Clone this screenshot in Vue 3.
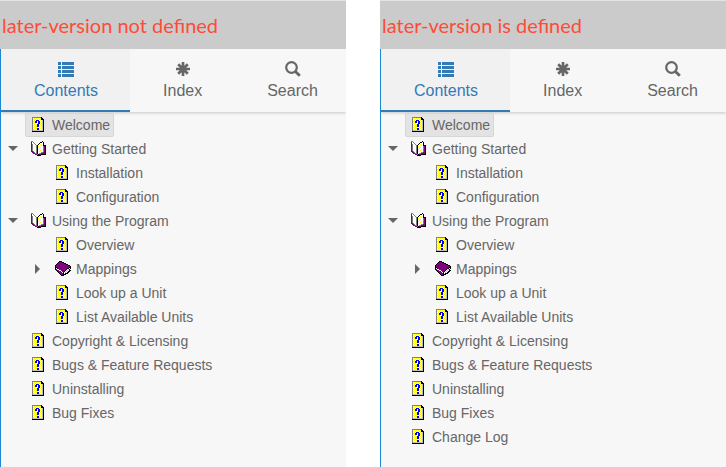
<script setup>
import { reactive } from 'vue'

const topics = (extra) => [
  { title: 'Welcome', selected: true },
  { title: 'Getting Started', open: true, children: [
    { title: 'Installation' },
    { title: 'Configuration' },
  ] },
  { title: 'Using the Program', open: true, children: [
    { title: 'Overview' },
    { title: 'Mappings', open: false, children: [] },
    { title: 'Look up a Unit' },
    { title: 'List Available Units' },
  ] },
  { title: 'Copyright & Licensing' },
  { title: 'Bugs & Feature Requests' },
  { title: 'Uninstalling' },
  { title: 'Bug Fixes' },
  ...extra,
]

const panels = reactive([
  { heading: 'later-version not defined', nodes: topics([]) },
  { heading: 'later-version is defined', nodes: topics([{ title: 'Change Log' }]) },
])

// Flatten the visible part of a tree into rows that carry their depth.
const rows = (nodes, depth = 0) =>
  nodes.flatMap((node) => [
    { node, depth },
    ...(node.open ? rows(node.children, depth + 1) : []),
  ])

const tabs = ['Contents', 'Index', 'Search']

const palette = { G: '#808080', W: '#ffffff', Y: '#ffff00', B: '#0000ff', K: '#000000', P: '#800080', S: '#c0c0c0' }

// Pixel art, one character per pixel.
const art = {
  page: [
    ' GGGGGGGGGK     ',
    ' GWYWYWYWYKK    ',
    ' GYWYWYWYWKKK   ',
    ' GWYWBBBWYWSK   ',
    ' GYWBBWBBWYSK   ',
    ' GWYBBWBBYWSK   ',
    ' GYWYWWBBWYSK   ',
    ' GWYWYBBWYWSK   ',
    ' GYWYWBBYWYSK   ',
    ' GWYWYBBWYWSK   ',
    ' GYWYWYWYWYSK   ',
    ' GWYWYBBWYWSK   ',
    ' GYWYWBBYWYSK   ',
    ' GSSSSSSSSSSK   ',
    ' KKKKKKKKKKKK   ',
  ],
  open: [
    'GG         K    ',
    'PWG      KKWK   ',
    'PWWG    KWWWK   ',
    'PGWWG  KWYWWK   ',
    'PGWWWGKWWWYWKKK ',
    'PGWWWGKYWWWWGPK ',
    'PGWWWGKWWYWWGPK ',
    'PGWWWGKWYWWWGPK ',
    'PGWWWGKYWWYWGPK ',
    'PGWWWGKWWYWWGPK ',
    'PPGWWGKWYWWWGPK ',
    ' PPGWGKWWWGGPPK ',
    '  PPGGKWGGPPPPK ',
    '    PPGKPPKKKKK ',
    '      KKKK      ',
  ],
  closed: [
    '    KKK         ',
    '   KPPPKK       ',
    '  KPPPPPPKK     ',
    ' KPPPPPPPPPKK   ',
    'KPPPPPPPPPPPPKK ',
    'KPPPPPPPPPPPPPPK',
    'KKPPPPPPPPPPPPKK',
    'KWKPPPPPPPPPKKWK',
    'KPWWPPPPPPPKWSK ',
    ' KPPWWPPPPKWSWKK',
    '  KPPPWPPKWSWKK ',
    '   KPPPWKWSWKK  ',
    '    KPPPKWKKK   ',
    '     KPPKKK     ',
    '      KKK       ',
  ],
}

// Merge equal neighbours in every line of the art into single rects.
const toRects = (lines) =>
  lines.flatMap((line, y) =>
    [...line.matchAll(/([A-Z])\1*/g)].map((m) => ({
      x: m.index, y, w: m[0].length, fill: palette[m[1]],
    })),
  )

const icons = Object.fromEntries(Object.entries(art).map(([k, v]) => [k, toRects(v)]))
const iconFor = (node) => (node.children ? (node.open ? icons.open : icons.closed) : icons.page)
</script>

<template>
  <main class="compare">
    <section v-for="panel in panels" :key="panel.heading" class="panel">
      <h2 class="banner">{{ panel.heading }}</h2>
      <div class="help">
        <nav class="tabs">
          <button v-for="tab in tabs" :key="tab" type="button" class="tab" :class="{ active: tab === 'Contents' }">
            <svg v-if="tab === 'Contents'" class="glyph" viewBox="0 0 16 16" shape-rendering="crispEdges" aria-hidden="true">
              <path d="M0 1h3v3H0zM4 1h12v3H4zM0 5h3v3H0zM4 5h12v3H4zM0 9h3v3H0zM4 9h12v3H4zM0 13h3v3H0zM4 13h12v3H4z" />
            </svg>
            <svg v-else-if="tab === 'Index'" class="glyph" viewBox="0 0 16 16" aria-hidden="true">
              <path d="M8 1v14M1 8h14M3.2 3.2l9.6 9.6M12.8 3.2l-9.6 9.6" fill="none" stroke="currentColor" stroke-width="2.7" />
            </svg>
            <svg v-else class="glyph" viewBox="0 0 16 16" aria-hidden="true">
              <circle cx="6.5" cy="6.5" r="5.3" fill="none" stroke="currentColor" stroke-width="2.2" />
              <path d="M10.4 10.4l4.4 4.4" fill="none" stroke="currentColor" stroke-width="2.8" />
            </svg>
            <span>{{ tab }}</span>
          </button>
        </nav>
        <ul class="tree">
          <li v-for="{ node, depth } in rows(panel.nodes)" :key="node.title" class="row" :class="{ nested: depth > 0 }">
            <button
              v-if="node.children"
              type="button"
              class="toggle"
              :aria-label="'Toggle ' + node.title"
              :aria-expanded="node.open"
              @click="node.open = !node.open"
            >
              <svg class="caret" viewBox="0 0 10 10" aria-hidden="true">
                <path v-if="node.open" d="M0 2h10L5 7z" />
                <path v-else d="M3 0l5 5-5 5z" />
              </svg>
            </button>
            <span v-else class="toggle"></span>
            <a href="#" class="label" :class="{ selected: node.selected }">
              <svg class="icon" viewBox="0 0 16 16" shape-rendering="crispEdges" aria-hidden="true">
                <rect v-for="(r, i) in iconFor(node)" :key="i" :x="r.x" :y="r.y" :width="r.w" height="1" :fill="r.fill" />
              </svg>
              <span>{{ node.title }}</span>
            </a>
          </li>
        </ul>
      </div>
    </section>
  </main>
</template>

<style>
body {
  margin: 0;
  background: #ffffff;
}
</style>

<style scoped>
.compare {
  display: grid;
  grid-template-columns: 1fr 1fr;
  gap: 34px;
  min-height: 100vh;
  font-family: "Liberation Sans", Arial, sans-serif;
  color: #666666;
}
.panel {
  display: flex;
  flex-direction: column;
  min-width: 0;
}
.banner {
  margin: 0;
  padding: 0 2px;
  border-top: 1px solid #e4e4e4;
  background: #cbcbcb;
  color: #ff4b37;
  font: 400 20px/48px Lato, sans-serif;
  white-space: nowrap;
}
.help {
  flex: 1;
  border-left: 1px solid #1c86d6;
  background: #f7f7f7;
  overflow: hidden;
}
.tabs {
  display: flex;
  box-shadow: 0 1px 3px rgba(0, 0, 0, 0.2);
}
.tab {
  flex: none;
  display: flex;
  flex-direction: column;
  align-items: center;
  gap: 4px;
  padding: 12px 32px 10px 33px;
  border: 0;
  border-bottom: 2px solid transparent;
  background: none;
  color: inherit;
  font: inherit;
  font-size: 16px;
  line-height: 19px;
  cursor: pointer;
}
.tab.active {
  border-bottom-color: #337ab7;
  background: #f1f1f1;
  color: #337ab7;
}
.glyph {
  width: 16px;
  height: 16px;
  fill: currentColor;
}
.tree {
  margin: 0;
  padding: 1px 0 0;
  list-style: none;
}
.row {
  display: flex;
  height: 24px;
}
.nested {
  padding-left: 24px;
}
.toggle {
  display: flex;
  align-items: center;
  justify-content: center;
  width: 24px;
  padding: 0;
  border: 0;
  background: none;
  color: inherit;
}
.caret {
  width: 10px;
  height: 10px;
  fill: currentColor;
}
.label {
  display: flex;
  align-items: center;
  gap: 5px;
  padding: 0 3px 0 5px;
  border: 1px solid transparent;
  color: inherit;
  font-size: 14px;
  text-decoration: none;
  white-space: nowrap;
}
.label.selected {
  border-color: #d6d6d6;
  border-radius: 2px;
  background: #e3e3e3;
}
.icon {
  width: 16px;
  height: 16px;
}
</style>
